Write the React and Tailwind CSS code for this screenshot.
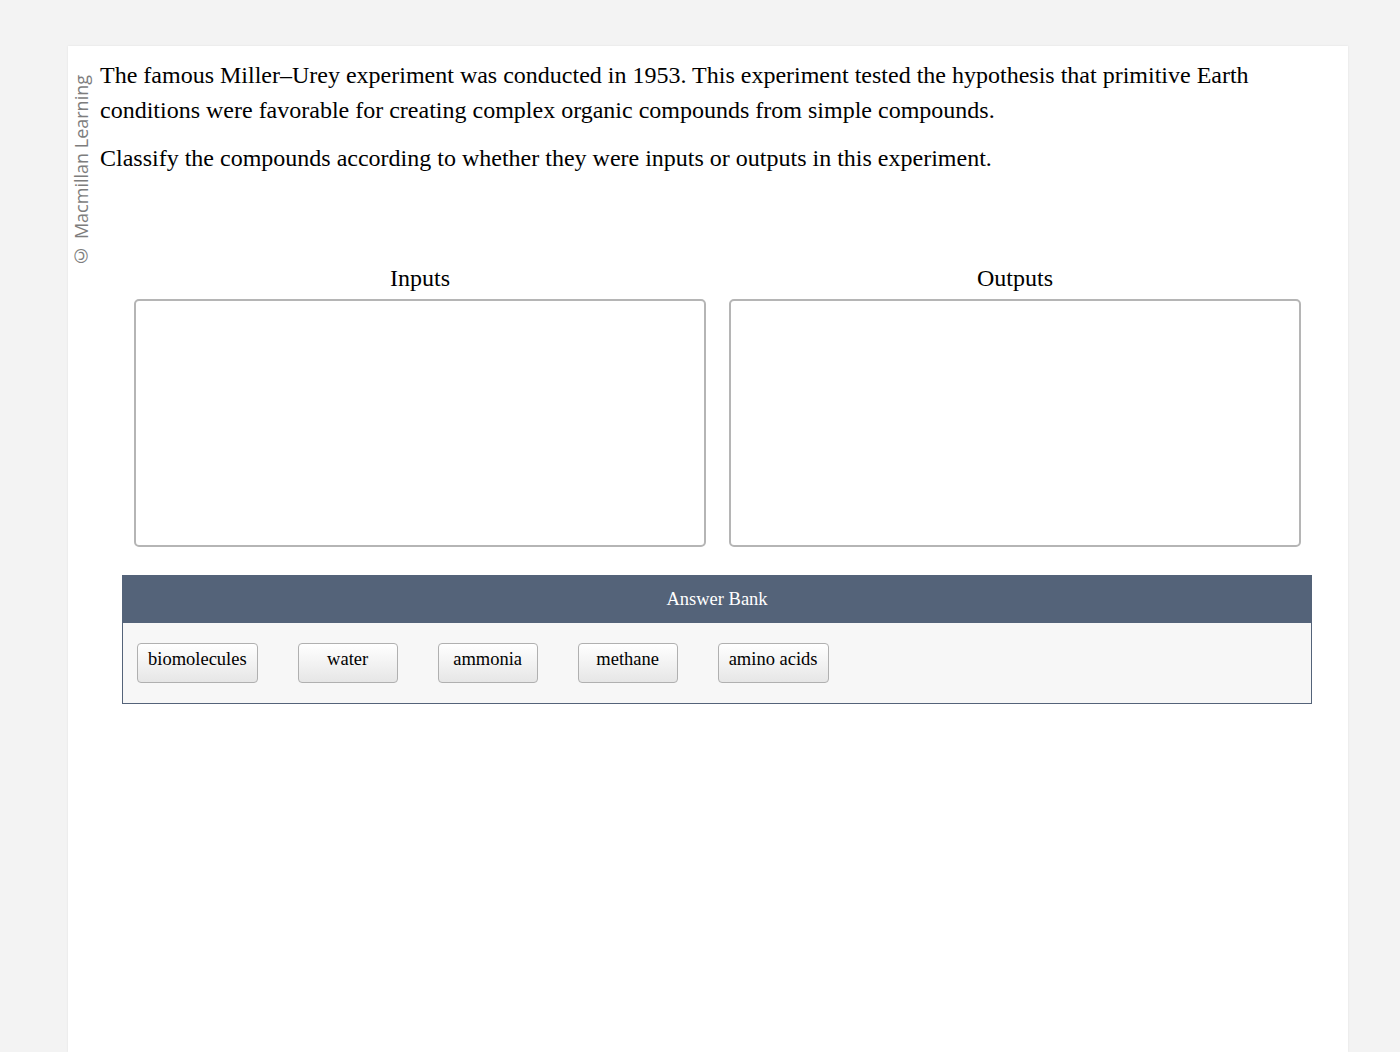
const chips = ['biomolecules', 'water', 'ammonia', 'methane', 'amino acids'];

const serif = { fontFamily: '"Liberation Serif", "Times New Roman", serif' };

const DropZone = ({ label }) => (
  <div className="flex flex-col items-center">
    <div className="text-[24px] leading-[28px] text-black mb-[7px]">{label}</div>
    <div className="w-full h-[248px] bg-white border-2 border-[#b5b5b5] rounded-[5px]"></div>
  </div>
);

export default function App() {
  return (
    <div className="min-h-[1052px] bg-[#f3f3f3] pt-[46px]" style={serif}>
      <div className="ml-[68px] w-[1280px] min-h-[1006px] bg-white shadow-[0_0_2px_rgba(0,0,0,0.08)] flex">
        <div className="w-[32px] shrink-0 pl-[3px] pt-[29px]">
          <div
            className="[writing-mode:vertical-rl] rotate-180 text-[18px] leading-[20px] text-[#7d7d7d]"
            style={{ fontFamily: '"Open Sans", "Noto Sans", sans-serif' }}
          >
            © Macmillan Learning
          </div>
        </div>

        <div className="flex-1 pt-[12px]">
          <p className="text-[24px] leading-[35px] text-black pr-[60px]">
            The famous Miller–Urey experiment was conducted in 1953. This experiment tested the hypothesis that primitive Earth conditions were favorable for creating complex organic compounds from simple compounds.
          </p>
          <p className="text-[24px] leading-[35px] text-black mt-[13px]">
            Classify the compounds according to whether they were inputs or outputs in this experiment.
          </p>

          <div className="mt-[88px] ml-[34px] w-[1167px] grid grid-cols-2 gap-[23px]">
            <DropZone label="Inputs" />
            <DropZone label="Outputs" />
          </div>

          <div className="mt-[28px] ml-[22px] w-[1190px] border border-[#546379]">
            <div className="h-[47px] bg-[#546379] flex items-center justify-center text-white text-[18.5px]">
              Answer Bank
            </div>
            <div className="bg-[#f7f7f7] h-[80px] pl-[14px] pt-[20px] flex items-start gap-[40px]">
              {chips.map((c) => (
                <div
                  key={c}
                  className="min-w-[100px] h-[40px] px-[10px] pt-[4px] text-center text-[18.5px] leading-[22px] text-black border border-[#b0b0b0] rounded-[4px] bg-gradient-to-b from-white to-[#e6e6e6]"
                >
                  {c}
                </div>
              ))}
            </div>
          </div>
        </div>
      </div>
    </div>
  );
}
